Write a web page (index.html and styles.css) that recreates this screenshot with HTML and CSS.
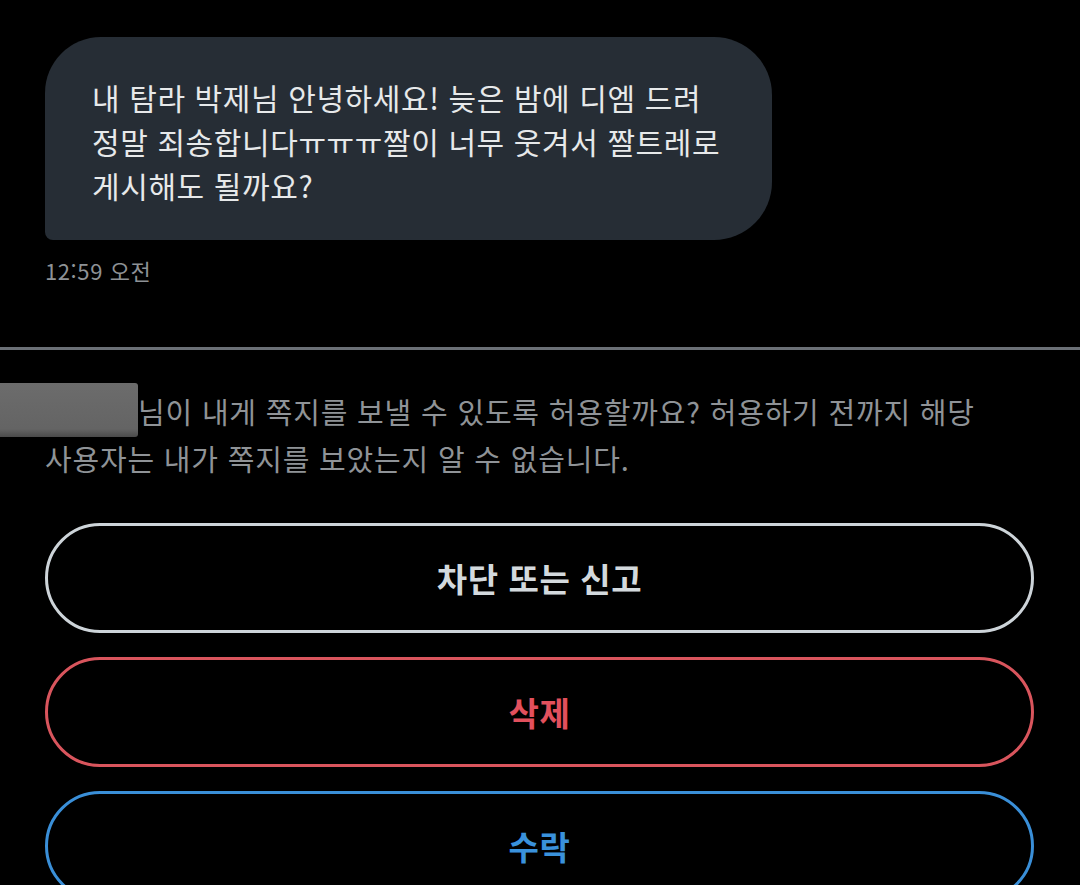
FILE: index.html
```html
<!DOCTYPE html>
<html lang="ko">
<head>
<meta charset="utf-8">
<link rel="stylesheet" href="styles.css">
</head>
<body>
<div class="page">
  <section class="thread">
    <div class="bubble">내 탐라 박제님 안녕하세요! 늦은 밤에 디엠 드려<br>정말 죄송합니다ㅠㅠㅠ짤이 너무 웃겨서 짤트레로<br>게시해도 될까요?</div>
    <div class="time">12:59 오전</div>
  </section>
  <hr class="divider">
  <section class="request">
    <p class="notice"><span class="name">사용자</span>님이 내게 쪽지를 보낼 수 있도록 허용할까요? 허용하기 전까지 해당<br>사용자는 내가 쪽지를 보았는지 알 수 없습니다.</p>
    <div class="redact"></div>
    <div class="actions">
      <button class="btn btn-neutral">차단 또는 신고</button>
      <button class="btn btn-danger">삭제</button>
      <button class="btn btn-accept">수락</button>
    </div>
  </section>
</div>
</body>
</html>
```

FILE: styles.css
```css
html, body {
  margin: 0;
  padding: 0;
  background: #000;
  height: 885px;
  overflow: hidden;
}
body {
  font-family: "Noto Sans CJK KR", "Noto Sans", sans-serif;
  color: #e7e9ea;
}
.page {
  width: 1080px;
}
.thread {
  padding: 37px 0 0 45px;
  height: 347px;
  box-sizing: border-box;
}
.bubble {
  width: 727px;
  box-sizing: border-box;
  background: #262d35;
  border-radius: 56px 58px 58px 8px;
  padding: 38px 30px 33px 47px;
  font-size: 30px;
  letter-spacing: 0.6px;
  line-height: 44px;
  color: #e7e9ea;
  white-space: nowrap;
}
.time {
  margin-top: 16px;
  font-size: 22px;
  letter-spacing: 0.6px;
  line-height: 28px;
  color: #8e9296;
}
.divider {
  margin: 0;
  border: 0;
  height: 3px;
  background: #6b7076;
}
.request {
  position: relative;
  padding: 38px 46px 0 45px;
}
.notice {
  margin: 0;
  font-size: 29px;
  letter-spacing: 0.8px;
  line-height: 47px;
  color: #8f9397;
  white-space: nowrap;
}
.name {
  display: inline-block;
  width: 93px;
  color: transparent;
  letter-spacing: 0;
}
.redact {
  position: absolute;
  left: 0;
  top: 33px;
  width: 138px;
  height: 54px;
  background: linear-gradient(180deg, #6c6c6c 0%, #646464 85%, #4a4a4a 100%);
  border-radius: 0 3px 3px 0;
}
.actions {
  margin-top: 41px;
  display: flex;
  flex-direction: column;
  gap: 24px;
}
.btn {
  height: 110px;
  width: 989px;
  box-sizing: border-box;
  border-radius: 55px;
  background: #000;
  border: 3px solid;
  font-family: "Noto Sans CJK KR", "Noto Sans", sans-serif;
  font-size: 33px;
  letter-spacing: 0.6px;
  font-weight: 700;
  padding: 0;
  display: flex;
  align-items: center;
  justify-content: center;
}
.btn-neutral {
  border-color: #cdd4d9;
  color: #d3d9dd;
}
.btn-danger {
  border-color: #d9555d;
  color: #e2505d;
}
.btn-accept {
  border-color: #3a8fd8;
  color: #3a92dc;
}
```
